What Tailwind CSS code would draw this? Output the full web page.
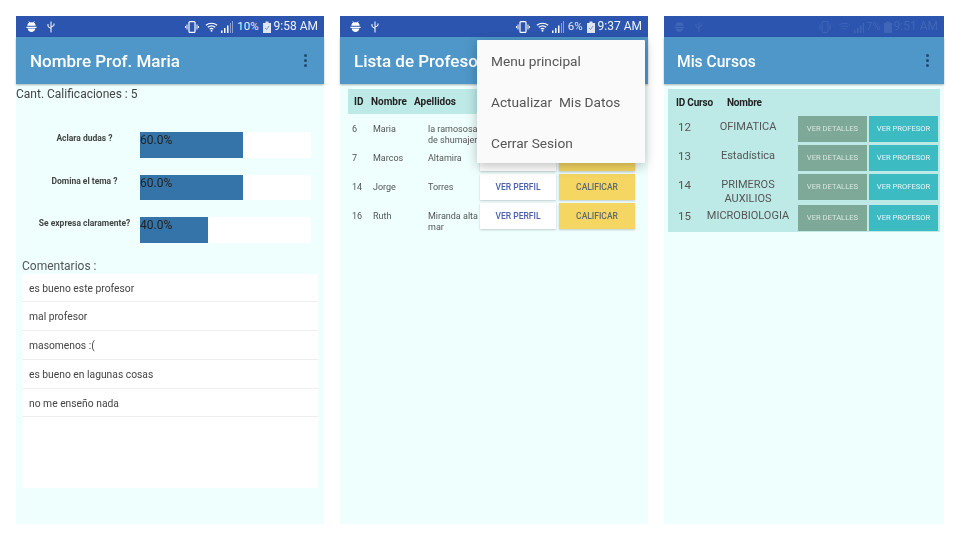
<!DOCTYPE html>
<html lang="es">
<head>
    <meta charset="UTF-8">
    <title>Profesores</title>
    <script src="https://cdn.jsdelivr.net/npm/@tailwindcss/browser@4"></script>
</head>
<body class="bg-white font-['Roboto',sans-serif]">
<div class="flex gap-4 px-4 pt-4 h-[540px] w-[960px] overflow-hidden blur-[0.4px]">

    <!-- Phone 1: Nombre Prof. Maria -->
    <section class="w-[308px] h-[508px] flex flex-col bg-[#eefffd]">
        <div class="h-[21px] shrink-0 bg-[#2b55ae] flex items-center pl-[10px] pr-[6px] text-white">
            <svg class="w-[11px] h-[11px]" viewBox="0 0 12 12" fill="#fff"><path d="M1.500 5.200a4.500 3.800 0 0 1 9 0z"/><path d="M3 .5l1.500 1.800M9 .5L7.500 2.300" stroke="#fff"/><path d="M.5 6.200h11v1.300H.5zM1.800 8.200h8.400C10 10.500 8 12 6 12s-4-1.500-4.200-3.800z"/></svg>
            <svg class="w-[8px] h-[12px] ml-[10px]" viewBox="0 0 8 12" fill="none" stroke="#fff"><path d="M4 .5V11.500M1 3v2.500l3 2M7 2.500v2L4 6"/></svg>
            <svg class="w-[14px] h-[12px] ml-auto" viewBox="0 0 14 12" fill="none" stroke="#fff"><rect x="4" y=".6" width="6" height="10.800" rx="1" stroke-width="1.200"/><path d="M2 3.500v5M.5 5v2M12 3.500v5M13.500 5v2"/></svg>
            <svg class="w-[13px] h-[10px] ml-[6px]" viewBox="0 0 14 10" fill="none" stroke="#fff" stroke-width="1.300"><path d="M1 3.200c3.500-3 8.500-3 12 0M3 5.300c2.500-2 5.500-2 8 0M5 7.300c1.300-1 2.700-1 4 0"/><circle cx="7" cy="9" r="1" fill="#fff" stroke="none"/></svg>
            <svg class="w-[12px] h-[12px] ml-[3px]" viewBox="0 0 12 12"><path d="M0 12V9.500h1.500V12zM3 12V7h1.500v5zM6 12V4.500h1.500V12z" fill="#fff"/><path d="M9 12V2h1V12zM11 12V0h1V12z" fill="#fff" fill-opacity=".45"/></svg>
            <span class="text-[11.500px] leading-[21px] ml-[4px] text-[#e8edf7]">10%</span>
            <svg class="w-[8px] h-[12px] ml-[4px]" viewBox="0 0 8 12"><path d="M0 2h2.500V.5h3V2H8v10H0z" fill="#fff" fill-opacity=".85"/><path d="M2 7l1.500 1.500L6 5" stroke="#7a94cc" fill="none"/></svg>
            <span class="text-[12px] leading-[21px] ml-[3px] text-[#eef2fa]">9:58 AM</span>
        </div>
        <div class="h-[47px] shrink-0 bg-[#4f97c9] shadow-[0_1px_2px_rgba(0,0,0,0.3)] flex items-center pl-[14px] pr-[17px]">
            <h1 class="text-[17px] font-medium text-white pt-[3px]">Nombre Prof. Maria</h1>
            <div class="ml-auto flex flex-col gap-[2px]">
                <i class="block w-[3px] h-[3px] rounded-full bg-[#1f4a6b]"></i>
                <i class="block w-[3px] h-[3px] rounded-full bg-[#1f4a6b]"></i>
                <i class="block w-[3px] h-[3px] rounded-full bg-[#1f4a6b]"></i>
            </div>
        </div>
        <p class="text-[12px] leading-[14px] pt-[3px] text-[#444]">Cant. Calificaciones : 5</p>
        <div class="flex flex-col gap-[17px] mt-[31px]">
            <div class="flex">
                <p class="w-[124px] text-center text-[8.500px] font-bold text-[#444] pl-[13px]">Aclara dudas ?</p>
                <div class="w-[171px] h-[25.500px] bg-white"><div class="h-full bg-[#3574a8] text-[12px] leading-[17px] text-[#222]" style="width:60%">60.0%</div></div>
            </div>
            <div class="flex">
                <p class="w-[124px] text-center text-[8.500px] font-bold text-[#444] pl-[13px]">Domina el tema ?</p>
                <div class="w-[171px] h-[25.500px] bg-white"><div class="h-full bg-[#3574a8] text-[12px] leading-[17px] text-[#222]" style="width:60%">60.0%</div></div>
            </div>
            <div class="flex">
                <p class="w-[124px] text-center text-[8.500px] font-bold text-[#444] pl-[13px] whitespace-nowrap">Se expresa claramente?</p>
                <div class="w-[171px] h-[25.500px] bg-white"><div class="h-full bg-[#3574a8] text-[12px] leading-[17px] text-[#222]" style="width:40%">40.0%</div></div>
            </div>
        </div>
        <div class="mx-[6px] mt-[16px]">
            <p class="text-[12px] leading-[14px] text-[#555]">Comentarios :</p>
            <ul class="bg-white h-[214px] text-[10.300px] text-[#444] mt-[1px]">
                <li class="h-[28.800px] leading-[29px] pl-[7px] border-b border-[#eee]">es bueno este profesor</li>
                <li class="h-[28.800px] leading-[29px] pl-[7px] border-b border-[#eee]">mal profesor</li>
                <li class="h-[28.800px] leading-[29px] pl-[7px] border-b border-[#eee]">masomenos :(</li>
                <li class="h-[28.800px] leading-[29px] pl-[7px] border-b border-[#eee]">es bueno en lagunas cosas</li>
                <li class="h-[28.800px] leading-[29px] pl-[7px] border-b border-[#eee]">no me enseño nada</li>
            </ul>
        </div>
    </section>

    <!-- Phone 2: Lista de Profesores -->
    <section class="relative w-[308px] h-[508px] flex flex-col bg-[#eefffd]">
        <div class="h-[21px] shrink-0 bg-[#2b55ae] flex items-center pl-[10px] pr-[6px] text-white">
            <svg class="w-[11px] h-[11px]" viewBox="0 0 12 12" fill="#fff"><path d="M1.500 5.200a4.500 3.800 0 0 1 9 0z"/><path d="M3 .5l1.500 1.800M9 .5L7.500 2.300" stroke="#fff"/><path d="M.5 6.200h11v1.300H.5zM1.800 8.200h8.400C10 10.500 8 12 6 12s-4-1.500-4.200-3.800z"/></svg>
            <svg class="w-[8px] h-[12px] ml-[10px]" viewBox="0 0 8 12" fill="none" stroke="#fff"><path d="M4 .5V11.500M1 3v2.500l3 2M7 2.500v2L4 6"/></svg>
            <svg class="w-[14px] h-[12px] ml-auto" viewBox="0 0 14 12" fill="none" stroke="#fff"><rect x="4" y=".6" width="6" height="10.800" rx="1" stroke-width="1.200"/><path d="M2 3.500v5M.5 5v2M12 3.500v5M13.500 5v2"/></svg>
            <svg class="w-[13px] h-[10px] ml-[6px]" viewBox="0 0 14 10" fill="none" stroke="#fff" stroke-width="1.300"><path d="M1 3.200c3.500-3 8.500-3 12 0M3 5.300c2.500-2 5.500-2 8 0M5 7.300c1.300-1 2.700-1 4 0"/><circle cx="7" cy="9" r="1" fill="#fff" stroke="none"/></svg>
            <svg class="w-[12px] h-[12px] ml-[3px]" viewBox="0 0 12 12"><path d="M0 12V9.500h1.500V12zM3 12V7h1.500v5zM6 12V4.500h1.500V12z" fill="#fff"/><path d="M9 12V2h1V12zM11 12V0h1V12z" fill="#fff" fill-opacity=".45"/></svg>
            <span class="text-[11.500px] leading-[21px] ml-[4px] text-[#e8edf7]">6%</span>
            <svg class="w-[8px] h-[12px] ml-[4px]" viewBox="0 0 8 12"><path d="M0 2h2.500V.5h3V2H8v10H0z" fill="#fff" fill-opacity=".85"/><path d="M2 7l1.500 1.500L6 5" stroke="#7a94cc" fill="none"/></svg>
            <span class="text-[12px] leading-[21px] ml-[3px] text-[#eef2fa]">9:37 AM</span>
        </div>
        <div class="h-[47px] shrink-0 bg-[#4f97c9] shadow-[0_1px_2px_rgba(0,0,0,0.3)] flex items-center pl-[14px] overflow-hidden">
            <h1 class="w-[123px] overflow-hidden text-[17px] font-medium text-white whitespace-nowrap pt-[3px]">Lista de Profesores</h1>
        </div>
        <div class="mx-[8px] mt-[5px] h-[25px] bg-[#bdeae7] grid grid-cols-[17px_43px_1fr] items-center pl-[6px] text-[10px] font-bold text-[#222]">
            <span>ID</span><span>Nombre</span><span>Apellidos</span>
        </div>
        <div class="mt-[2px] ml-[8px] flex flex-col gap-[3px] text-[9px] leading-[11px] text-[#555]">
            <div class="grid grid-cols-[25px_55px_52px_76px_79px] grid-rows-[26px] h-[26px]">
                <span class="pl-[4px] pt-[8px]">6</span><span class="pt-[8px]">Maria</span><span class="pt-[8px]">la ramososa de shumajer</span>
                <button class="bg-white shadow-[0_1px_2px_rgba(0,0,0,0.2)] text-[8.500px] font-medium text-[#4a5fae]">VER PERFIL</button>
                <button class="ml-[3px] bg-[#f5d662] shadow-[0_1px_2px_rgba(0,0,0,0.2)] text-[8.500px] font-medium text-[#5b6a70]">CALIFICAR</button>
            </div>
            <div class="grid grid-cols-[25px_55px_52px_76px_79px] grid-rows-[26px] h-[26px]">
                <span class="pl-[4px] pt-[8px]">7</span><span class="pt-[8px]">Marcos</span><span class="pt-[8px]">Altamira</span>
                <button class="bg-white shadow-[0_1px_2px_rgba(0,0,0,0.2)] text-[8.500px] font-medium text-[#4a5fae]">VER PERFIL</button>
                <button class="ml-[3px] bg-[#f5d662] shadow-[0_1px_2px_rgba(0,0,0,0.2)] text-[8.500px] font-medium text-[#5b6a70]">CALIFICAR</button>
            </div>
            <div class="grid grid-cols-[25px_55px_52px_76px_79px] grid-rows-[26px] h-[26px]">
                <span class="pl-[4px] pt-[8px]">14</span><span class="pt-[8px]">Jorge</span><span class="pt-[8px]">Torres</span>
                <button class="bg-white shadow-[0_1px_2px_rgba(0,0,0,0.2)] text-[8.500px] font-medium text-[#4a5fae]">VER PERFIL</button>
                <button class="ml-[3px] bg-[#f5d662] shadow-[0_1px_2px_rgba(0,0,0,0.2)] text-[8.500px] font-medium text-[#5b6a70]">CALIFICAR</button>
            </div>
            <div class="grid grid-cols-[25px_55px_52px_76px_79px] grid-rows-[26px] h-[26px]">
                <span class="pl-[4px] pt-[8px]">16</span><span class="pt-[8px]">Ruth</span><span class="pt-[8px]">Miranda alta mar</span>
                <button class="bg-white shadow-[0_1px_2px_rgba(0,0,0,0.2)] text-[8.500px] font-medium text-[#4a5fae]">VER PERFIL</button>
                <button class="ml-[3px] bg-[#f5d662] shadow-[0_1px_2px_rgba(0,0,0,0.2)] text-[8.500px] font-medium text-[#5b6a70]">CALIFICAR</button>
            </div>
        </div>
        <!-- overflow menu -->
        <div class="absolute left-[137px] top-[24px] w-[168px] h-[123px] bg-[#fafafa] rounded-[1px] shadow-[0_3px_12px_rgba(0,0,0,0.25)] flex flex-col pl-[14px] text-[13.700px] text-[#555]">
            <span class="h-[41px] leading-[43px]">Menu principal</span>
            <span class="h-[41px] leading-[43px] whitespace-pre">Actualizar  Mis Datos</span>
            <span class="h-[41px] leading-[43px]">Cerrar Sesion</span>
        </div>
    </section>

    <!-- Phone 3: Mis Cursos -->
    <section class="w-[280px] h-[508px] flex flex-col bg-[#eefffd]">
        <div class="h-[21px] shrink-0 bg-[#2b55ae] flex items-center pl-[10px] pr-[6px]">
            <svg class="w-[11px] h-[11px]" viewBox="0 0 12 12" fill="#4066b8"><path d="M1.500 5.200a4.500 3.800 0 0 1 9 0zM.5 6.200h11v1.300H.5zM1.800 8.200h8.400C10 10.500 8 12 6 12s-4-1.500-4.200-3.800z"/></svg>
            <svg class="w-[8px] h-[12px] ml-[10px]" viewBox="0 0 8 12" fill="none" stroke="#4066b8"><path d="M4 .5V11.500M1 3v2.500l3 2M7 2.500v2L4 6"/></svg>
            <svg class="w-[14px] h-[12px] ml-auto" viewBox="0 0 14 12" fill="none" stroke="#4066b8"><rect x="4" y=".6" width="6" height="10.800" rx="1"/><path d="M2 3.500v5M12 3.500v5"/></svg>
            <svg class="w-[13px] h-[10px] ml-[6px]" viewBox="0 0 14 10" fill="none" stroke="#4066b8"><path d="M1 3.200c3.500-3 8.500-3 12 0M3 5.300c2.500-2 5.500-2 8 0M5 7.300c1.300-1 2.700-1 4 0"/></svg>
            <svg class="w-[12px] h-[12px] ml-[3px]" viewBox="0 0 12 12"><path d="M0 12V9.500h1.500V12zM3 12V7h1.500v5zM6 12V4.500h1.500V12zM9 12V2h1V12z" fill="#4066b8"/></svg>
            <span class="text-[11px] leading-[21px] text-[#4066b8]">7%</span>
            <svg class="w-[8px] h-[12px] ml-[3px]" viewBox="0 0 8 12"><path d="M0 2h2.500V.5h3V2H8v10H0z" fill="#4066b8"/></svg>
            <span class="text-[12px] leading-[21px] ml-[2px] text-[#4066b8]">9:51 AM</span>
        </div>
        <div class="h-[47px] shrink-0 bg-[#4f97c9] shadow-[0_1px_2px_rgba(0,0,0,0.3)] flex items-center pl-[13px] pr-[15px]">
            <h1 class="text-[15.600px] font-medium text-white pt-[4px]">Mis Cursos</h1>
            <div class="ml-auto flex flex-col gap-[2px]">
                <i class="block w-[3px] h-[3px] rounded-full bg-[#1f4a6b]"></i>
                <i class="block w-[3px] h-[3px] rounded-full bg-[#1f4a6b]"></i>
                <i class="block w-[3px] h-[3px] rounded-full bg-[#1f4a6b]"></i>
            </div>
        </div>
        <div class="mx-[4px] mt-[5px] h-[143px] bg-[#bdeae7] pl-[8px]">
            <div class="h-[27px] grid grid-cols-[51px_1fr] items-center text-[10px] font-bold text-[#222] tracking-[-0.2px]">
                <span>ID Curso</span><span>Nombre</span>
            </div>
            <div class="text-[11px] leading-[14px] text-[#555]">
                <div class="grid grid-cols-[24px_96px_71px_71px] h-[29px]">
                    <span class="pl-[2px] pt-[4px] text-[11.500px]">12</span><span class="pt-[4px] text-center">OFIMATICA</span>
                    <button class="h-[26px] ml-[2px] bg-[#7ea897] text-[7.600px] text-[#d8e6e0]">VER DETALLES</button>
                    <button class="h-[26px] ml-[2px] bg-[#3cbcc2] text-[7.600px] text-[#e4f6f7]">VER PROFESOR</button>
                </div>
                <div class="grid grid-cols-[24px_96px_71px_71px] h-[29px]">
                    <span class="pl-[2px] pt-[4px] text-[11.500px]">13</span><span class="pt-[4px] text-center">Estadística</span>
                    <button class="h-[26px] ml-[2px] bg-[#7ea897] text-[7.600px] text-[#d8e6e0]">VER DETALLES</button>
                    <button class="h-[26px] ml-[2px] bg-[#3cbcc2] text-[7.600px] text-[#e4f6f7]">VER PROFESOR</button>
                </div>
                <div class="grid grid-cols-[24px_96px_71px_71px] h-[31px]">
                    <span class="pl-[2px] pt-[4px] text-[11.500px]">14</span><span class="pt-[4px] text-center">PRIMEROS<br>AUXILIOS</span>
                    <button class="h-[26px] ml-[2px] bg-[#7ea897] text-[7.600px] text-[#d8e6e0]">VER DETALLES</button>
                    <button class="h-[26px] ml-[2px] bg-[#3cbcc2] text-[7.600px] text-[#e4f6f7]">VER PROFESOR</button>
                </div>
                <div class="grid grid-cols-[24px_96px_71px_71px] h-[26px]">
                    <span class="pl-[2px] pt-[4px] text-[11.500px]">15</span><span class="pt-[4px] text-center">MICROBIOLOGIA</span>
                    <button class="h-[26px] ml-[2px] bg-[#7ea897] text-[7.600px] text-[#d8e6e0]">VER DETALLES</button>
                    <button class="h-[26px] ml-[2px] bg-[#3cbcc2] text-[7.600px] text-[#e4f6f7]">VER PROFESOR</button>
                </div>
            </div>
        </div>
    </section>
</div>
</body>
</html>
